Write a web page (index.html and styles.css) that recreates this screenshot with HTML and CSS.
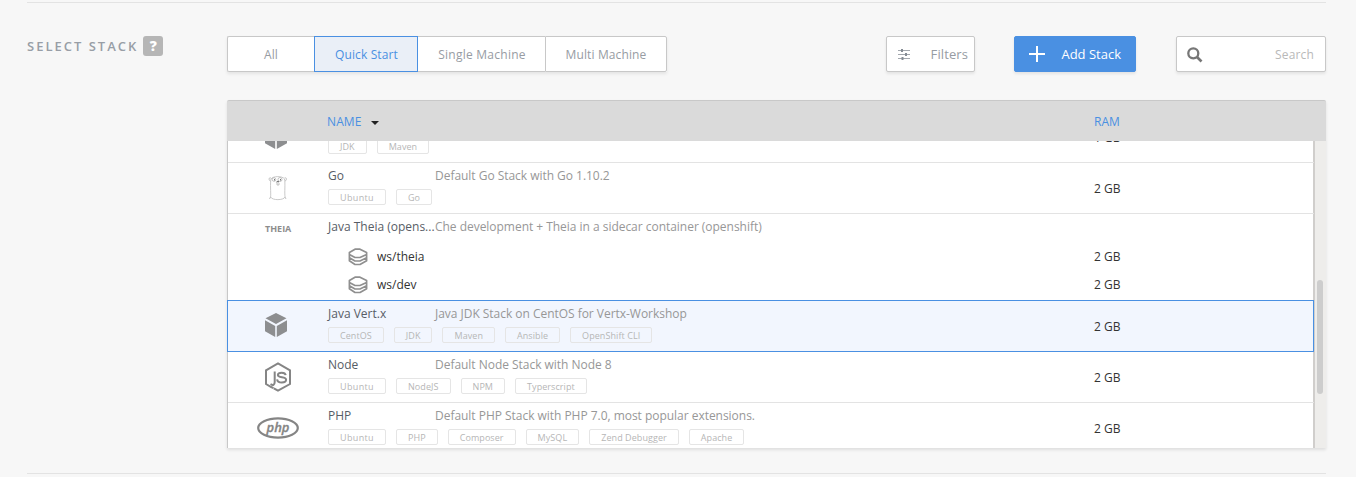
FILE: index.html
```
<!DOCTYPE html>
<html lang="en">
<head>
<meta charset="utf-8">
<title>Select Stack</title>
<link rel="stylesheet" href="styles.css">
</head>
<body>
<svg class="defs" width="0" height="0" aria-hidden="true">
  <symbol id="cube" viewBox="0 0 22 24"><path fill="#8d8e90" d="M11 0 21.500 5.300 11 11 .5 5.300zM0 7.300 10.200 12.900V24L0 18.300zM22 7.300 11.800 12.900V24L22 18.300z"/></symbol>
  <symbol id="layers" viewBox="0 0 20 18"><g fill="none" stroke="#8f8f8f" stroke-width="1.700" stroke-linejoin="round"><path d="M7 1.200h5L18.600 4.500v2L12 9.500H7L1.400 6.500v-2zM1.400 6.500v6.300L7 16.500h5l6.600-3.700V6.500M1.400 9.700 7 13h5l6.600-3.300"/></g></symbol>
</svg>
<main class="section">
  <h2 class="section-label">SELECT STACK <span class="help">?</span></h2>
  <div class="content">
    <div class="toolbar">
      <div class="tabs">
        <button class="tab all">All</button><button class="tab quick active">Quick Start</button><button class="tab single">Single Machine</button><button class="tab multi">Multi Machine</button>
      </div>
      <button class="filters"><svg width="12" height="12" viewBox="0 0 12 12"><path d="M0 2.500h12M0 6.500h12M0 10.500h12" stroke="#a3a8ae"/><path d="M3 1h2v3H3zM7 5h2v3H7zM3.500 9h2v3h-2z" fill="#858c94"/></svg><span>Filters</span></button>
      <button class="add"><svg width="16" height="16" viewBox="0 0 16 16"><path d="M8 0v16M0 8h16" stroke="#fff" stroke-width="2"/></svg><span>Add Stack</span></button>
      <div class="search"><svg width="16" height="16" viewBox="0 0 16 16"><circle cx="6.300" cy="6.300" r="5" fill="none" stroke="#777" stroke-width="2.300"/><path d="M10 10l4.500 4.500" stroke="#777" stroke-width="2.700"/></svg><span>Search</span></div>
    </div>
    <div class="panel">
      <div class="head"><span class="head-name">NAME</span><i class="caret"></i><span class="head-ram">RAM</span></div>
      <div class="viewport">
        <div class="list">
          <div class="row first"><div class="icon"><svg width="22" height="24"><use href="#cube"/></svg></div><div class="info"><div class="title"></div><div class="tags"><span>JDK</span><span>Maven</span></div></div><div class="ram">1 GB</div></div>
          <div class="row"><div class="icon"><svg class="go" width="20" height="26" viewBox="0 0 20 26"><path d="M3 4C5 .8 14.500 .8 16.500 4c1 4-.2 14 .6 18-1.500 3.500-13 3.500-14.500 0C3 18 2 8 3 4z" fill="none" stroke="#bbb" stroke-width=".8"/><g fill="none" stroke="#aaa" stroke-width=".7"><circle cx="6" cy="4.500" r="1.800"/><circle cx="12" cy="4.500" r="2"/><path d="M3 3C0 2 1 6 2.500 6M16.500 3c3-1 2 3 .5 3M8 7c1-1 3-1 3 0s-3 1-3 0M9 8v2h2V8M2.500 22l-1 2M17 22l1 2"/></g><path d="M6 4h1v1.500H6zM12 4h1v1.500h-1zM9 6h2v1H9z" fill="#777"/></svg></div><div class="info"><div class="title"><span class="name">Go</span><span class="desc">Default Go Stack with Go 1.10.2</span></div><div class="tags"><span class="wide">Ubuntu</span><span>Go</span></div></div><div class="ram">2 GB</div></div>
          <div class="row multi-row"><div class="icon"><span class="theia">THEIA</span></div><div class="info"><div class="title"><span class="name">Java Theia (opens...</span><span class="desc">Che development + Theia in a sidecar container (openshift)</span></div>
            <div class="machine"><svg width="20" height="18"><use href="#layers"/></svg><span>ws/theia</span><span class="machine-ram">2 GB</span></div>
            <div class="machine"><svg width="20" height="18"><use href="#layers"/></svg><span>ws/dev</span><span class="machine-ram">2 GB</span></div></div></div>
          <div class="row selected"><div class="icon"><svg width="22" height="24"><use href="#cube"/></svg></div><div class="info"><div class="title"><span class="name">Java Vert.x</span><span class="desc">Java JDK Stack on CentOS for Vertx-Workshop</span></div><div class="tags"><span>CentOS</span><span>JDK</span><span>Maven</span><span>Ansible</span><span>OpenShift CLI</span></div></div><div class="ram">2 GB</div></div>
          <div class="row"><div class="icon"><svg class="node" width="28" height="30" viewBox="0 0 28 30"><g fill="none" stroke="#858585" stroke-width="2"><path d="M9.500 26.200 7.200 25 2 22V8.300L14 1.500l12 6.800V22l-12 6.700-4.200-2.400"/><path d="M10.700 9.500V20c0 3-1.600 3.600-4.200 2.200"/><path d="M21.700 13.200c-.3-1.800-1.600-2.500-4-2.500-2.500 0-3.800.8-3.800 2.300 0 1.700 1.500 1.900 4 2.200 2.900.3 4.200.8 4.200 2.600s-1.500 2.700-4.300 2.700c-3 0-4.500-1-4.700-3.200"/></g></svg></div><div class="info"><div class="title"><span class="name">Node</span><span class="desc">Default Node Stack with Node 8</span></div><div class="tags"><span class="wide">Ubuntu</span><span>NodeJS</span><span>NPM</span><span>Typerscript</span></div></div><div class="ram">2 GB</div></div>
          <div class="row"><div class="icon"><svg class="php" width="42" height="22" viewBox="0 0 42 22"><ellipse cx="21" cy="11" rx="19.800" ry="9.600" fill="none" stroke="#858585" stroke-width="2.200"/><text x="21" y="14.500" text-anchor="middle">php</text></svg></div><div class="info"><div class="title"><span class="name">PHP</span><span class="desc">Default PHP Stack with PHP 7.0, most popular extensions.</span></div><div class="tags"><span class="wide">Ubuntu</span><span>PHP</span><span>Composer</span><span>MySQL</span><span>Zend Debugger</span><span>Apache</span></div></div><div class="ram">2 GB</div></div>
        </div>
        <div class="scrollbar"><div class="thumb"></div></div>
      </div>
    </div>
  </div>
</main>
</body>
</html>
```
FILE: styles.css
```
* { box-sizing: border-box; }
body { margin: 0; height: 477px; overflow: hidden; background: #f7f7f7; font: 12px/18px "Open Sans", sans-serif; color: #333; }
.defs { display: block; }
.section { display: flex; width: 1299px; height: 472px; margin: 2px 0 0 27px; border-top: 1px solid #e3e3e3; border-bottom: 1px solid #e3e3e3; }
.section-label { display: flex; align-items: center; width: 200px; height: 20px; margin: 33px 0 0; font-size: 13px; font-weight: 600; letter-spacing: 2px; color: #989ea6; white-space: nowrap; }
.help { width: 20px; height: 20px; margin-left: 5px; border-radius: 3px; background: #b6b6b6; color: #fff; font-size: 14px; font-weight: 800; line-height: 20px; text-align: center; letter-spacing: 0; }
.content { width: 1099px; padding-top: 33px; }
.toolbar { display: flex; height: 36px; }
button { font: inherit; padding: 0; margin: 0; }
.tabs { display: flex; width: 440px; margin-right: 219px; box-shadow: 0 2px 3px rgba(0,0,0,.08); }
.tab { height: 36px; padding-top: 2px; border: 1px solid #c8c8c8; background: #fff; color: #979ca3; font-size: 12px; letter-spacing: .12px; }
.all { width: 87px; border-right: 0; border-radius: 2px 0 0 2px; }
.quick { width: 104px; padding-left: 1px; }
.single { width: 127px; padding-left: 1px; border-left: 0; border-right: 0; letter-spacing: .25px; }
.multi { width: 122px; border-radius: 0 2px 2px 0; }
.active { border-color: #4a90e2; background: #eaeff7; color: #4a90e2; }
.filters, .add, .search { display: flex; align-items: center; height: 36px; border: 1px solid #c8c8c8; border-radius: 2px; background: #fff; box-shadow: 0 2px 3px rgba(0,0,0,.08); font-size: 13px; }
.filters { width: 89px; padding: 0 6px 0 11px; justify-content: space-between; color: #979ca3; letter-spacing: .1px; }
.add { width: 122px; margin: 0 40px 0 39px; padding: 0 14px; justify-content: space-between; border-color: #4a90e2; background: #4a90e2; color: #fff; }
.search { width: 150px; padding: 1px 11px 0 10px; justify-content: space-between; color: #b9b9b9; font-size: 12px; letter-spacing: .15px; }
.panel { width: 1099px; height: 348px; margin-top: 28px; box-shadow: 0 2px 3px rgba(0,0,0,.1); }
.head { display: flex; align-items: center; height: 41px; padding: 2px 0 0 100px; border-top: 1px solid #c8c8c8; border-radius: 2px 2px 0 0; background: #dadada; color: #4a90e2; }
.head-name { width: 35px; letter-spacing: .1px; }
.caret { margin: 2px 0 0 9px; border: 4px solid transparent; border-top-color: #222; border-bottom: 0; }
.head-ram { margin-left: 715px; }
.viewport { display: flex; height: 307px; overflow: hidden; background: #eeedeb; }
.list { width: 1088px; height: 336px; margin-top: -29px; border-left: 1px solid #c8c8c8; border-right: 2px solid #d0cecc; background: #fff; }
.row { display: flex; width: 1086px; height: 51px; border-bottom: 1px solid #e3e3e3; }
.row.multi-row { height: 86px; border: 0; }
.row.selected { position: relative; width: 1087px; height: 52px; margin-left: -1px; border: 1px solid #4a90e2; background: #f2f6fe; }
.icon { width: 100px; height: 50px; padding: 13px 0 0 37px; line-height: 0; }
.selected .icon { padding-top: 12px; }
.icon:has(.go) { padding-left: 40px; padding-top: 12px; }
.icon:has(.node) { padding: 10px 0 0 36px; }
.icon:has(.php) { padding: 14px 0 0 29px; }
.icon:has(.theia) { padding: 10px 0 0 37px; }
.theia { display: block; font: 700 9px/9px "Open Sans", sans-serif; color: #8d8d8d; }
.php text { font: italic 600 13px "Open Sans", sans-serif; fill: #858585; stroke: #858585; stroke-width: .3px; }
.info { width: 766px; padding-top: 4px; }
.title { display: flex; height: 18px; white-space: nowrap; }
.name { width: 107px; color: #575d66; }
.desc { color: #979797; letter-spacing: -.03px; }
.tags { display: flex; gap: 10px; margin-top: 4px; }
.tags span { height: 16px; padding: 0 11px; border: 1px solid #e5e5e5; border-radius: 2px; font-size: 9px; line-height: 15px; letter-spacing: .07px; color: #b6b6b6; white-space: nowrap; }
.tags .wide { letter-spacing: .36px; }
.ram { padding-top: 17px; }
.machine { display: flex; align-items: center; width: 1000px; height: 28px; padding-left: 20px; color: #333; }
.title + .machine { margin-top: 7px; }
.machine span { width: 120px; margin-left: 9px; }
.machine .machine-ram { margin-left: 597px; }
.scrollbar { width: 11px; padding: 139px 3px 0 2px; }
.thumb { height: 114px; border-radius: 3px; background: #cdcdcd; }
```
